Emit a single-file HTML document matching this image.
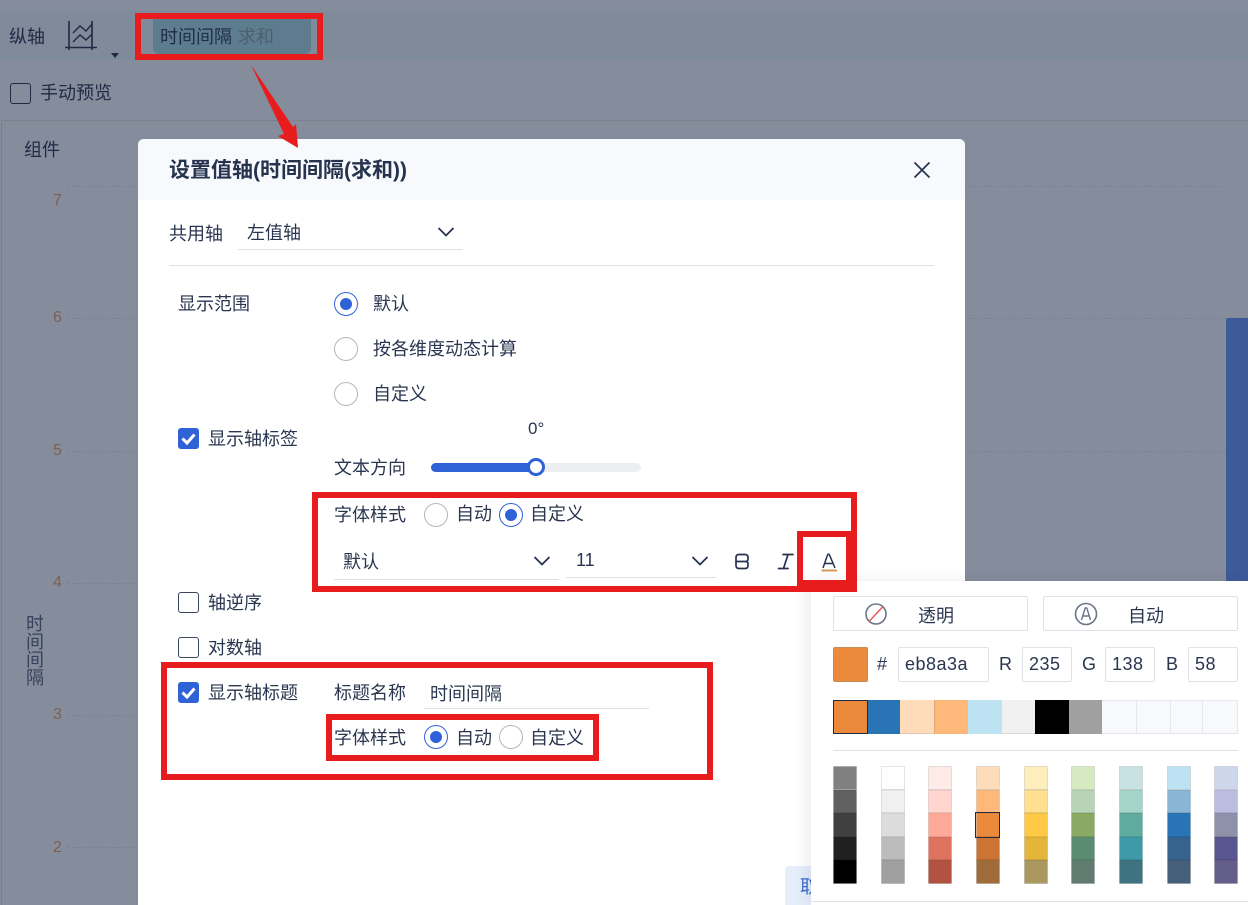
<!DOCTYPE html>
<html><head><meta charset="utf-8">
<style>
html,body{margin:0;padding:0}
body{width:1248px;height:905px;overflow:hidden;position:relative;background:#858d9d;font-family:"Liberation Sans","Noto Sans CJK SC",sans-serif;color:#2a3650}
.a{position:absolute}
.t{position:absolute;font-size:18px;line-height:24px;margin-top:1px;white-space:nowrap;color:#2a3650}
.bg{color:#1f2a44}
.n{position:absolute;font-size:16px;line-height:20px;color:#7d5f52;left:53px}
.g{position:absolute;height:0;border-top:1px dashed #7b8392;left:67px;width:1160px}
.r{position:absolute;width:22px;height:22px;border:1px solid #b4b6bc;border-radius:50%;background:#fff}
.r.on{border-color:#2f62d6}
.r.on:after{content:"";position:absolute;left:5px;top:5px;width:12px;height:12px;border-radius:50%;background:#2f62d6}
.c{position:absolute;width:19px;height:19px;border:1px solid #3a4660;border-radius:3px;background:#fff;left:178px}
.c.on{width:21px;height:21px;border:0;background:#2f62d6}
.c svg{position:absolute;left:0;top:0}
.l{position:absolute;height:1px;background:#dfe1e5}
.red{position:absolute;border:6px solid #e81c1c;box-sizing:border-box}
.in{position:absolute;box-sizing:border-box;height:35px;top:647px;border:1px solid #e0e2e7;border-radius:2px;background:#fff;font-size:18px;letter-spacing:.5px;line-height:33px;padding-left:6px;color:#2a3650}
.pl{position:absolute;top:640px;font-size:18px;line-height:24px;color:#2a3650}
.sw{position:absolute;top:700px;height:34px;box-sizing:border-box}
</style></head><body>

<!-- background -->
<div class="a" style="left:0;top:11px;width:1248px;height:49px;background:#7f8a9b"></div>
<div class="a" style="left:1px;top:120px;width:1247px;height:785px;border-left:1px solid #79818f;border-top:1px solid #79818f;box-sizing:border-box"></div>
<div class="t bg" style="left:9px;top:24px">纵轴</div>
<svg class="a" style="left:60px;top:15px" width="60" height="50" viewBox="60 15 60 50" fill="none" stroke="#1f2a44" stroke-width="1.4">
<path d="M69 21V50M92 21V50M65 47.5H97" stroke-width="1.6"/>
<path d="M73 33L80 26L86 31L92 24M73 42L80 35L86 40L92 34"/>
<path d="M111 53H119L115 58Z" fill="#1f2a44" stroke="none"/>
</svg>
<div class="a" style="left:153px;top:19px;width:158px;height:35px;background:#5d7c8d;border-radius:0 0 6px 6px"></div>
<div class="t" style="left:160px;top:24px;color:#1f2d44">时间间隔</div>
<div class="t" style="left:238px;top:24px;color:#4d5f73">求和</div>
<div class="a" style="left:10px;top:83px;width:19px;height:19px;border:1px solid #1f2a44;border-radius:3px"></div>
<div class="t" style="left:40px;top:80px;color:#1f2a44">手动预览</div>
<div class="t bg" style="left:24px;top:137px">组件</div>
<div class="g" style="top:186px"></div><div class="g" style="top:318px"></div><div class="g" style="top:451px"></div><div class="g" style="top:583px"></div><div class="g" style="top:715px"></div><div class="g" style="top:847px"></div>
<div class="n" style="top:191px">7</div><div class="n" style="top:308px">6</div><div class="n" style="top:441px">5</div><div class="n" style="top:573px">4</div><div class="n" style="top:705px">3</div><div class="n" style="top:838px">2</div>
<div class="t" style="left:26px;top:614px;width:18px;line-height:18px;white-space:normal;color:#36425a">时间间隔</div>
<div class="a" style="left:1226px;top:318px;width:22px;height:300px;background:#3d5a99;border-radius:2px 0 0 0"></div>

<!-- modal -->
<div class="a" style="left:138px;top:139px;width:827px;height:766px;background:#fff;border-radius:6px 6px 0 0;overflow:hidden">
<div class="a" style="left:0;top:0;width:827px;height:61px;background:#f7f9fd"></div>
</div>
<div class="t" style="left:169px;top:158px;font-size:21px;font-weight:700;color:#26334f">设置值轴(时间间隔(求和))</div>
<svg class="a" style="left:912px;top:160px" width="20" height="20" fill="none" stroke="#26334f" stroke-width="1.7"><path d="M2.5 2.5L17.5 17.5M17.5 2.5L2.5 17.5"/></svg>

<div class="t" style="left:169px;top:221px">共用轴</div>
<div class="t" style="left:247px;top:220px">左值轴</div>
<svg class="a" style="left:437px;top:226px" width="18" height="12" fill="none" stroke="#26334f" stroke-width="1.8"><path d="M1.5 2L9 9.5L16.5 2"/></svg>
<div class="l" style="left:238px;top:249px;width:225px"></div>
<div class="l" style="left:169px;top:265px;width:765px"></div>

<div class="t" style="left:178px;top:291px">显示范围</div>
<div class="r on" style="left:334px;top:292px"></div><div class="t" style="left:373px;top:291px">默认</div>
<div class="r" style="left:334px;top:337px"></div><div class="t" style="left:373px;top:336px">按各维度动态计算</div>
<div class="r" style="left:334px;top:382px"></div><div class="t" style="left:373px;top:381px">自定义</div>

<div class="c on" style="top:428px"><svg width="21" height="21" fill="none" stroke="#fff" stroke-width="3"><path d="M4.5 10.5L9 15L16.5 6.5"/></svg></div>
<div class="t" style="left:208px;top:426px">显示轴标签</div>
<div class="t" style="left:528px;top:416px;font-size:17px">0°</div>
<div class="t" style="left:334px;top:455px">文本方向</div>
<div class="a" style="left:431px;top:463px;width:210px;height:9px;border-radius:5px;background:#edeef0"></div>
<div class="a" style="left:431px;top:463px;width:105px;height:9px;border-radius:5px 0 0 5px;background:#2f62d6"></div>
<div class="a" style="left:527px;top:458px;width:12px;height:12px;border:3px solid #2f62d6;border-radius:50%;background:#fff"></div>

<div class="t" style="left:334px;top:502px">字体样式</div>
<div class="r" style="left:424px;top:503px"></div><div class="t" style="left:456px;top:501px">自动</div>
<div class="r on" style="left:499px;top:503px"></div><div class="t" style="left:530px;top:501px">自定义</div>
<div class="t" style="left:343px;top:549px">默认</div>
<svg class="a" style="left:533px;top:555px" width="18" height="12" fill="none" stroke="#26334f" stroke-width="1.8"><path d="M1.5 2L9 9.5L16.5 2"/></svg>
<div class="l" style="left:334px;top:579px;width:225px"></div>
<div class="t" style="left:576px;top:547px">11</div>
<svg class="a" style="left:691px;top:555px" width="18" height="12" fill="none" stroke="#26334f" stroke-width="1.8"><path d="M1.5 2L9 9.5L16.5 2"/></svg>
<div class="l" style="left:566px;top:577px;width:150px"></div>
<svg class="a" style="left:730px;top:550px" width="110" height="24" fill="none" stroke="#26334f" stroke-width="1.7">
<path d="M9 4.500H15Q18 4.500 18 7.500V9Q18 11.500 15.500 11.500Q18 11.500 18 14V15.500Q18 18.500 15 18.500H9Q6 18.500 6 15.500V7.500Q6 4.500 9 4.500ZM6 11.500H16"/>
<path d="M53 4.500H63M48.500 18.500H58M58 4.500L53.500 18.500" stroke-linecap="round"/>
<path d="M93 18L97.500 5Q98.500 3 99.500 5L105 18M95 13.500H103" stroke-width="1.5"/>
<path d="M91.500 20.500H107" stroke="#d49a63" stroke-width="2"/>
</svg>

<div class="c" style="top:592px"></div><div class="t" style="left:208px;top:590px">轴逆序</div>
<div class="c" style="top:637px"></div><div class="t" style="left:208px;top:635px">对数轴</div>
<div class="c on" style="top:682px"><svg width="21" height="21" fill="none" stroke="#fff" stroke-width="3"><path d="M4.5 10.5L9 15L16.5 6.5"/></svg></div>
<div class="t" style="left:208px;top:680px">显示轴标题</div>
<div class="t" style="left:334px;top:680px">标题名称</div>
<div class="t" style="left:430px;top:681px">时间间隔</div>
<div class="l" style="left:424px;top:708px;width:225px"></div>
<div class="t" style="left:334px;top:725px">字体样式</div>
<div class="r on" style="left:424px;top:725px"></div><div class="t" style="left:456px;top:725px">自动</div>
<div class="r" style="left:499px;top:725px"></div><div class="t" style="left:530px;top:725px">自定义</div>

<div class="a" style="left:785px;top:866px;width:40px;height:39px;background:#e6eefb;border-radius:3px 0 0 0"></div>
<div class="t" style="left:800px;top:874px;color:#3d6bd0">取</div>

<!-- colour popup -->
<div class="a" style="left:811px;top:581px;width:437px;height:324px;background:#fff;box-shadow:-6px -1px 12px rgba(40,50,80,.08)"></div>
<div class="a" style="left:833px;top:596px;width:195px;height:35px;box-sizing:border-box;border:1px solid #e0e2e7;border-radius:2px"></div>
<div class="a" style="left:1043px;top:596px;width:195px;height:35px;box-sizing:border-box;border:1px solid #e0e2e7;border-radius:2px"></div>
<svg class="a" style="left:864px;top:602px" width="24" height="24" fill="none"><circle cx="12" cy="12" r="10" stroke="#6b7488" stroke-width="1.6"/><path d="M5.500 19L18.500 5" stroke="#e8605c" stroke-width="1.6"/></svg>
<svg class="a" style="left:1074px;top:602px" width="24" height="24" fill="none" stroke="#6b7488"><circle cx="12" cy="12" r="10.500" stroke-width="1.6"/><path d="M7.500 18L11 6.500Q12 5 13 6.500L16.500 18M9 14H15" stroke-width="1.4"/></svg>
<div class="t" style="left:918px;top:603px">透明</div>
<div class="t" style="left:1128px;top:603px">自动</div>

<div class="a" style="left:833px;top:647px;width:35px;height:35px;box-sizing:border-box;background:#eb8a3a;border:1px solid #c98b56;border-radius:2px"></div>
<div class="pl" style="left:877px;top:652px">#</div>
<div class="in" style="left:898px;width:91px">eb8a3a</div>
<div class="pl" style="left:999px;top:652px">R</div>
<div class="in" style="left:1022px;width:50px">235</div>
<div class="pl" style="left:1082px;top:652px">G</div>
<div class="in" style="left:1105px;width:50px">138</div>
<div class="pl" style="left:1166px;top:652px">B</div>
<div class="in" style="left:1188px;width:50px">58</div>

<div class="sw" style="left:833px;width:35px;background:#eb8a3a;border:1px solid #1f2a44"></div>
<div class="sw" style="left:868px;width:32px;background:#2874b5"></div>
<div class="sw" style="left:900px;width:34px;background:#fedcba;border-bottom:1px solid #ddc7ad"></div>
<div class="sw" style="left:934px;width:34px;background:#fdb87a;border-left:1px solid #dca678"></div>
<div class="sw" style="left:968px;width:34px;background:#bde2f2"></div>
<div class="sw" style="left:1002px;width:33px;background:#f0f0f0;border-bottom:1px solid #d8d8d8"></div>
<div class="sw" style="left:1035px;width:34px;background:#000"></div>
<div class="sw" style="left:1069px;width:33px;background:#a0a0a0"></div>
<div class="sw" style="left:1102px;width:35px;background:#f7f9fd;border:1px solid #e6e8ec;border-left:0"></div>
<div class="sw" style="left:1137px;width:34px;background:#f7f9fd;border:1px solid #e6e8ec;border-left:0"></div>
<div class="sw" style="left:1171px;width:32px;background:#f7f9fd;border:1px solid #e6e8ec;border-left:0"></div>
<div class="sw" style="left:1203px;width:35px;background:#f7f9fd;border:1px solid #e6e8ec;border-left:0"></div>

<div class="l" style="left:833px;top:750px;width:405px"></div>

<svg class="a" style="left:833px;top:766px" width="405" height="118" shape-rendering="crispEdges" stroke="rgba(0,0,0,.1)" stroke-width="1">
<g><rect x=".5" y=".5" width="23" height="23" fill="#808080"/><rect x=".5" y="24" width="23" height="23" fill="#606060"/><rect x=".5" y="47" width="23" height="24" fill="#404040"/><rect x=".5" y="71" width="23" height="23" fill="#202020"/><rect x=".5" y="94" width="23" height="23.5" fill="#000"/></g>
<g transform="translate(48 0)"><rect x=".5" y=".5" width="23" height="23" fill="#fff"/><rect x=".5" y="24" width="23" height="23" fill="#f0f0f0"/><rect x=".5" y="47" width="23" height="24" fill="#dcdcdc"/><rect x=".5" y="71" width="23" height="23" fill="#bcbcbc"/><rect x=".5" y="94" width="23" height="23.5" fill="#a0a0a0"/></g>
<g transform="translate(95 0)"><rect x=".5" y=".5" width="23" height="23" fill="#feeae6"/><rect x=".5" y="24" width="23" height="23" fill="#ffd5ce"/><rect x=".5" y="47" width="23" height="24" fill="#ffa999"/><rect x=".5" y="71" width="23" height="23" fill="#de7360"/><rect x=".5" y="94" width="23" height="23.5" fill="#b25240"/></g>
<g transform="translate(143 0)"><rect x=".5" y=".5" width="23" height="23" fill="#fedcba"/><rect x=".5" y="24" width="23" height="23" fill="#fdb87a"/><rect x=".5" y="47" width="23" height="24" fill="#eb8a3a"/><rect x=".5" y="71" width="23" height="23" fill="#cb7434"/><rect x=".5" y="94" width="23" height="23.5" fill="#a06c3a"/></g>
<g transform="translate(191 0)"><rect x=".5" y=".5" width="23" height="23" fill="#feeebc"/><rect x=".5" y="24" width="23" height="23" fill="#ffdf90"/><rect x=".5" y="47" width="23" height="24" fill="#ffc845"/><rect x=".5" y="71" width="23" height="23" fill="#e3b63b"/><rect x=".5" y="94" width="23" height="23.5" fill="#aa9860"/></g>
<g transform="translate(238 0)"><rect x=".5" y=".5" width="23" height="23" fill="#d5eac0"/><rect x=".5" y="24" width="23" height="23" fill="#b8d4b6"/><rect x=".5" y="47" width="23" height="24" fill="#8aa962"/><rect x=".5" y="71" width="23" height="23" fill="#5b8c72"/><rect x=".5" y="94" width="23" height="23.5" fill="#607c70"/></g>
<g transform="translate(286 0)"><rect x=".5" y=".5" width="23" height="23" fill="#c8e2e4"/><rect x=".5" y="24" width="23" height="23" fill="#a5d4c8"/><rect x=".5" y="47" width="23" height="24" fill="#60ab9f"/><rect x=".5" y="71" width="23" height="23" fill="#3d9aa6"/><rect x=".5" y="94" width="23" height="23.5" fill="#3f7382"/></g>
<g transform="translate(334 0)"><rect x=".5" y=".5" width="23" height="23" fill="#bde2f2"/><rect x=".5" y="24" width="23" height="23" fill="#8ab6d6"/><rect x=".5" y="47" width="23" height="24" fill="#2874b5"/><rect x=".5" y="71" width="23" height="23" fill="#35628f"/><rect x=".5" y="94" width="23" height="23.5" fill="#455f7a"/></g>
<g transform="translate(381 0)"><rect x=".5" y=".5" width="23" height="23" fill="#cdd7eb"/><rect x=".5" y="24" width="23" height="23" fill="#bbbce0"/><rect x=".5" y="47" width="23" height="24" fill="#8f90a9"/><rect x=".5" y="71" width="23" height="23" fill="#585590"/><rect x=".5" y="94" width="23" height="23.5" fill="#635f8a"/></g>
<rect x="142.500" y="46.500" width="24" height="25" fill="none" stroke="#1f2a44" stroke-width="1"/>
</svg>
<div class="l" style="left:811px;top:901px;width:437px"></div>

<!-- red annotations -->
<div class="red" style="left:135px;top:13px;width:188px;height:47px"></div>
<div class="red" style="left:312px;top:492px;width:545px;height:100px"></div>
<div class="a" style="left:797px;top:531px;width:60px;height:61px;box-sizing:border-box;background:transparent;border-style:solid;border-color:#e81c1c;border-width:6px 11px 12px 6px"></div>
<div class="red" style="left:161px;top:662px;width:552px;height:118px"></div>
<div class="red" style="left:326px;top:714px;width:273px;height:47px"></div>
<svg class="a" style="left:245px;top:60px" width="60" height="95" viewBox="245 60 60 95"><path d="M251 65L293 127L296 124L298 148L278 136L284 134Z" fill="#e81c1c"/></svg>

</body></html>
